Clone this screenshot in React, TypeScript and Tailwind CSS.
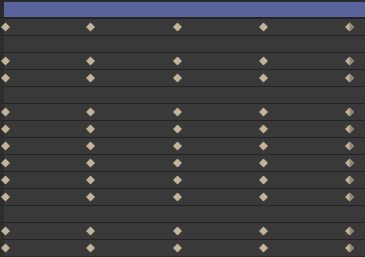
import React from "react";

const rows = [true, false, true, true, false, true, true, true, true, true, true, false, true, true];
const xs = [5, 90, 177, 263, 349];

function Diamond({ x, split }: { x: number; split?: boolean }) {
  return (
    <svg
      className="absolute top-1/2 -translate-y-1/2"
      style={{ left: x - 4.5 }}
      width="9"
      height="9"
      viewBox="0 0 9 9"
    >
      <polygon points="4.5,0 9,4.5 4.5,9 0,4.5" fill="#c2b39a" />
      {split && <polygon points="4.5,0 9,4.5 4.5,9" fill="#8f8676" />}
    </svg>
  );
}

export default function App() {
  return (
    <div className="w-[365px] h-[257px] bg-[#2a2a2a] overflow-hidden flex flex-col">
      <div className="h-[18px] pt-[2px] pl-[4px] border-b border-[#232323] shrink-0">
        <div className="h-full bg-[#59649c]" />
      </div>
      {rows.map((k, i) => (
        <div
          key={i}
          className="relative h-[17px] shrink-0 border-t border-[#232323] border-l-[4px] border-l-[#2e2e2e] bg-[#393939]"
        >
          {k &&
            xs.map((x, j) => <Diamond key={j} x={x - 4} split={j === 4} />)}
        </div>
      ))}
    </div>
  );
}
